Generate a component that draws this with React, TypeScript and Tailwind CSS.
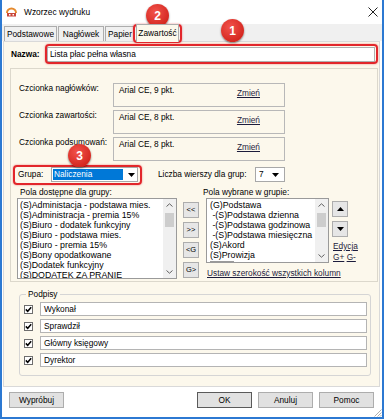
import React from "react";

const leftItems = [
  "(S)Administacja - podstawa mies.",
  "(S)Administracja - premia 15%",
  "(S)Biuro - dodatek funkcyjny",
  "(S)Biuro - podstawa mies.",
  "(S)Biuro - premia 15%",
  "(S)Bony opodatkowane",
  "(S)Dodatek funkcyjny",
  "(S)DODATEK ZA PRANIE",
];

const rightItems = [
  "(G)Podstawa",
  "\u00a0-(S)Podstawa dzienna",
  "\u00a0-(S)Podstawa godzinowa",
  "\u00a0-(S)Podstawa miesięczna",
  "(S)Akord",
  "(S)Prowizja",
];

const fonts = [
  { label: "Czcionka nagłówków:", value: "Arial CE, 9 pkt." },
  { label: "Czcionka zawartości:", value: "Arial CE, 8 pkt." },
  { label: "Czcionka podsumowań:", value: "Arial CE, 8 pkt." },
];

const signatures = ["Wykonał", "Sprawdził", "Główny księgowy", "Dyrektor"];

const DownTriangle = () => (
  <svg width="7" height="4" viewBox="0 0 7 4">
    <path d="M0 0 L7 0 L3.5 4 Z" fill="#000" />
  </svg>
);

const UpTriangle = () => (
  <svg width="7" height="4" viewBox="0 0 7 4">
    <path d="M0 4 L7 4 L3.5 0 Z" fill="#000" />
  </svg>
);

const ScrollBar = ({ thumbTop }: { thumbTop: number }) => (
  <div className="w-[13px] h-full bg-[#f0f0f0] flex flex-col items-center">
    <div className="h-[12px] flex items-center justify-center">
      <svg width="7" height="4" viewBox="0 0 7 4">
        <path d="M0.5 3.5 L3.5 0.8 L6.5 3.5" fill="none" stroke="#606060" strokeWidth="1" />
      </svg>
    </div>
    <div className="w-[9px] h-[14px] bg-[#cdcdcd]" style={{ marginTop: thumbTop }} />
    <div className="flex-1" />
    <div className="h-[12px] flex items-center justify-center">
      <svg width="7" height="4" viewBox="0 0 7 4">
        <path d="M0.5 0.5 L3.5 3.2 L6.5 0.5" fill="none" stroke="#606060" strokeWidth="1" />
      </svg>
    </div>
  </div>
);

const Badge = ({ n, className }: { n: string; className: string }) => (
  <div
    className={
      "absolute w-[23px] h-[23px] rounded-full bg-[radial-gradient(circle_at_40%_35%,#f2534c,#c9170f)] shadow-[0_1px_2px_rgba(0,0,0,0.5)] flex items-center justify-center text-white font-bold text-[12px] " +
      className
    }
  >
    {n}
  </div>
);

const SmallButton = ({ children }: { children: React.ReactNode }) => (
  <div className="w-[16px] h-[16px] bg-[#e6e6e6] border border-[#adadad] flex items-center justify-center text-[7.5px] leading-none">
    {children}
  </div>
);

export default function App() {
  return (
    <div className="relative w-[386px] h-[419px] bg-white overflow-hidden font-['Liberation_Sans',Arial,sans-serif] text-black text-[8.3px]">
      <div className="w-[384px] h-[419px] border-x-2 border-b-2 border-[#2c79d2] flex flex-col">
        {/* title bar */}
        <div className="h-[24px] flex items-center bg-white">
          <svg className="ml-[4px]" width="11" height="10" viewBox="0 0 11 10">
            <path d="M1 6 A4.5 4.5 0 0 1 10 6" fill="none" stroke="#e58a2e" strokeWidth="2" />
            <rect x="1" y="6" width="9" height="3.5" fill="#c9473a" />
            <rect x="3" y="7" width="1.5" height="1.5" fill="#fff" />
            <rect x="6.5" y="7" width="1.5" height="1.5" fill="#fff" />
          </svg>
          <span className="ml-[7px] text-[8.4px]">Wzorzec wydruku</span>
          <div className="flex-1" />
          <svg className="mr-[4px]" width="10" height="10" viewBox="0 0 10 10">
            <path d="M0.5 0.5 L9.5 9.5 M9.5 0.5 L0.5 9.5" stroke="#222" strokeWidth="1" />
          </svg>
        </div>

        {/* tabs */}
        <div className="h-[17px] bg-[#f0f0f0] flex items-end pl-[2px] gap-[1px]">
          <div className="w-[53px] h-[15px] border border-b-0 border-[#adadad] flex items-center justify-center">Podstawowe</div>
          <div className="w-[46px] h-[15px] border border-b-0 border-[#adadad] flex items-center justify-center">Nagłówek</div>
          <div className="w-[30px] h-[15px] border border-b-0 border-[#adadad] flex items-center justify-center">Papier</div>
          <div className="relative z-10 w-[43px] h-[18px] mb-[-1px] border border-b-0 border-[#adadad] bg-[#fcf8ec] flex items-center justify-center">Zawartość</div>
        </div>

        {/* tab page */}
        <div className="ml-[1px] w-[377px] h-[346px] border border-[#d9d9d9] bg-[#fcf8ec] flex flex-col">
          <div className="mt-[5px] h-[15px] flex items-center">
            <span className="ml-[7px] w-[36px] font-bold">Nazwa:</span>
            <div className="w-[328px] h-[15px] bg-white border border-[#b0b0b0] flex items-center pl-[2px]">Lista płac pełna własna</div>
          </div>

          {/* fonts and fields panel */}
          <div className="mt-[6px] ml-[6px] w-[368px] h-[214px] border border-[#dcd8cc] flex flex-col">
            <div className="mt-[14px] flex flex-col gap-[3px]">
              {fonts.map((f) => (
                <div className="flex" key={f.label}>
                  <span className="w-[102px] pl-[8px] leading-[10px] whitespace-nowrap">{f.label}</span>
                  <div className="w-[172px] h-[24px] border border-[#b8b8b8] flex justify-between pl-[5px] pr-[24px]">
                    <span className="pt-[1px] leading-[10px]">{f.value}</span>
                    <span className="pt-[4px] leading-[10px] underline text-[#1c1c3c]">Zmień</span>
                  </div>
                </div>
              ))}
            </div>

            <div className="mt-[6px] h-[15px] flex items-center">
              <span className="ml-[7px] w-[33px]">Grupa:</span>
              <div className="w-[87px] h-[15px] bg-white border border-[#a8a8a8] flex items-center pl-[1px]">
                <span className="w-[70px] h-[11px] bg-[#0078d7] text-white leading-[11px] pl-[1px]">Naliczenia</span>
                <span className="ml-[5px]">
                  <DownTriangle />
                </span>
              </div>
              <span className="ml-[20px] w-[97px] whitespace-nowrap">Liczba wierszy dla grup:</span>
              <div className="w-[30px] h-[15px] bg-white border border-[#a8a8a8] flex items-center pl-[3px] gap-[8px]">
                <span>7</span>
                <DownTriangle />
              </div>
            </div>

            <div className="mt-[5px] flex leading-[10px]">
              <span className="ml-[9px] w-[183px]">Pola dostępne dla grupy:</span>
              <span>Pola wybrane w grupie:</span>
            </div>

            <div className="mt-[1px] flex items-start">
              <div className="ml-[6px] w-[160px] h-[81px] bg-white border border-[#9a9a9a] flex overflow-hidden">
                <div className="flex-1 pt-[1px] pl-[2px] text-[8.8px] leading-[10px] whitespace-nowrap overflow-hidden">
                  {leftItems.map((it) => (
                    <div key={it}>{it}</div>
                  ))}
                </div>
                <ScrollBar thumbTop={2} />
              </div>

              <div className="ml-[6px] mt-[4px] flex flex-col gap-[4px]">
                <SmallButton>&lt;&lt;</SmallButton>
                <SmallButton>&gt;&gt;</SmallButton>
                <SmallButton>&lt;G</SmallButton>
                <SmallButton>G&gt;</SmallButton>
              </div>

              <div className="ml-[7px] flex flex-col w-[123px]">
                <div className="h-[65px] bg-white border border-[#9a9a9a] flex overflow-hidden">
                  <div className="flex-1 pt-[1px] pl-[3px] text-[8.8px] leading-[10px] whitespace-nowrap overflow-hidden">
                    {rightItems.map((it) => (
                      <div key={it}>{it}</div>
                    ))}
                    <div className="h-[2px] w-[24px] mt-[1px] bg-[#9a9a9a]" />
                  </div>
                  <ScrollBar thumbTop={2} />
                </div>
                <span className="mt-[5px] pl-[1px] leading-[10px] underline whitespace-nowrap text-[#1c1c3c]">Ustaw szerokość wszystkich kolumn</span>
              </div>

              <div className="ml-[3px] mt-[3px] flex flex-col">
                <div className="w-[16px] h-[16px] bg-[#e6e6e6] border border-[#adadad] flex items-center justify-center">
                  <UpTriangle />
                </div>
                <div className="mt-[4px] w-[16px] h-[16px] bg-[#e6e6e6] border border-[#adadad] flex items-center justify-center">
                  <DownTriangle />
                </div>
                <span className="mt-[4px] pl-[1px] leading-[10px] underline text-[#1c1c3c]">Edycja</span>
                <span className="mt-[1px] pl-[1px] leading-[10px] whitespace-nowrap text-[#1c1c3c]">
                  <span className="underline">G+</span> <span className="underline">G-</span>
                </span>
              </div>
            </div>
          </div>

          {/* signatures */}
          <fieldset className="mt-[7px] ml-[15px] w-[352px] border border-[#d5d5d5] rounded-[3px]">
            <legend className="ml-[6px] px-[2px] leading-[10px]">Podpisy</legend>
            <div className="pt-[3px] pb-[8px] pl-[4px] flex flex-col gap-[3px]">
              {signatures.map((s) => (
                <div className="h-[14px] flex items-center" key={s}>
                  <div className="w-[9px] h-[9px] bg-white border border-[#6e6e6e] flex items-center justify-center">
                    <svg width="7" height="7" viewBox="0 0 7 7">
                      <path d="M0.8 3.4 L2.7 5.3 L6.2 1.3" fill="none" stroke="#000" strokeWidth="1.5" />
                    </svg>
                  </div>
                  <div className="ml-[7px] w-[327px] h-[14px] bg-white border border-[#b4b4b4] flex items-center pl-[3px]">{s}</div>
                </div>
              ))}
            </div>
          </fieldset>
        </div>

        {/* bottom buttons */}
        <div className="mt-[5px] flex items-center">
          <div className="ml-[7px] w-[55px] h-[16px] bg-[#e1e1e1] border border-[#adadad] flex items-center justify-center">Wypróbuj</div>
          <div className="flex-1" />
          <div className="flex gap-[6px] mr-[8px]">
            <div className="w-[55px] h-[16px] bg-[#e1e1e1] border border-[#5a5a5a] flex items-center justify-center">OK</div>
            <div className="w-[55px] h-[16px] bg-[#e1e1e1] border border-[#adadad] flex items-center justify-center">Anuluj</div>
            <div className="w-[55px] h-[16px] bg-[#e1e1e1] border border-[#adadad] flex items-center justify-center">Pomoc</div>
          </div>
        </div>
      </div>

      {/* resize grip */}
      <svg className="absolute left-[374px] top-[409px]" width="8" height="8" viewBox="0 0 8 8">
        <path d="M7.5 0.5 L0.5 7.5 M7.5 3.5 L3.5 7.5 M7.5 6 L6 7.5" stroke="#9a9a9a" strokeWidth="0.8" />
      </svg>

      {/* annotations */}
      <div className="absolute left-[133px] top-[24px] w-[49px] h-[19px] border-2 border-[#e2262b] rounded-[4px] shadow-[0_0_2px_rgba(226,38,43,0.6)]" />
      <div className="absolute left-[45px] top-[44px] w-[333px] h-[20px] border-2 border-[#e2262b] rounded-[4px] shadow-[0_0_2px_rgba(226,38,43,0.6)]" />
      <div className="absolute left-[13px] top-[165px] w-[129px] h-[20px] border-2 border-[#e2262b] rounded-[4px] shadow-[0_0_2px_rgba(226,38,43,0.6)]" />
      <Badge n="2" className="left-[146px] top-[4px]" />
      <Badge n="1" className="left-[221px] top-[19px]" />
      <Badge n="3" className="left-[68px] top-[144px]" />
    </div>
  );
}
